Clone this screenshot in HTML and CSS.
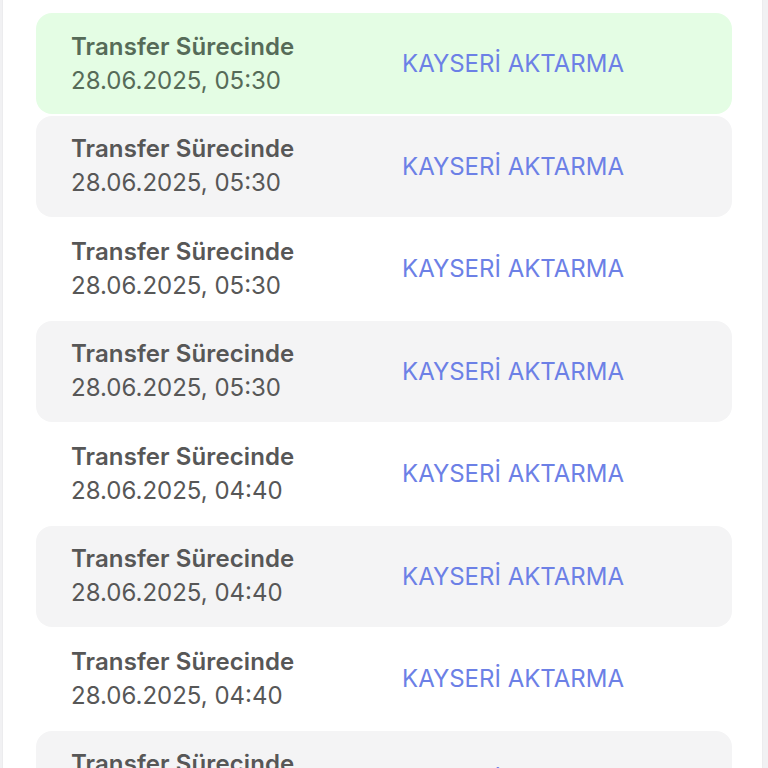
FILE: index.html
```html
<!DOCTYPE html>
<html lang="tr">
<head>
  <meta charset="UTF-8">
  <meta name="viewport" content="width=device-width, initial-scale=1.0">
  <title>Transferler</title>
  <link rel="stylesheet" href="styles.css">
</head>
<body>
  <div class="panel">
    <div class="list">
      <div class="row active">
        <div class="info">
          <div class="status">Transfer Sürecinde</div>
          <div class="date">28.06.2025, 05:30</div>
        </div>
        <div class="place">KAYSERİ AKTARMA</div>
      </div>
      <div class="row shaded">
        <div class="info">
          <div class="status">Transfer Sürecinde</div>
          <div class="date">28.06.2025, 05:30</div>
        </div>
        <div class="place">KAYSERİ AKTARMA</div>
      </div>
      <div class="row">
        <div class="info">
          <div class="status">Transfer Sürecinde</div>
          <div class="date">28.06.2025, 05:30</div>
        </div>
        <div class="place">KAYSERİ AKTARMA</div>
      </div>
      <div class="row shaded">
        <div class="info">
          <div class="status">Transfer Sürecinde</div>
          <div class="date">28.06.2025, 05:30</div>
        </div>
        <div class="place">KAYSERİ AKTARMA</div>
      </div>
      <div class="row">
        <div class="info">
          <div class="status">Transfer Sürecinde</div>
          <div class="date">28.06.2025, 04:40</div>
        </div>
        <div class="place">KAYSERİ AKTARMA</div>
      </div>
      <div class="row shaded">
        <div class="info">
          <div class="status">Transfer Sürecinde</div>
          <div class="date">28.06.2025, 04:40</div>
        </div>
        <div class="place">KAYSERİ AKTARMA</div>
      </div>
      <div class="row">
        <div class="info">
          <div class="status">Transfer Sürecinde</div>
          <div class="date">28.06.2025, 04:40</div>
        </div>
        <div class="place">KAYSERİ AKTARMA</div>
      </div>
      <div class="row shaded">
        <div class="info">
          <div class="status">Transfer Sürecinde</div>
          <div class="date">28.06.2025, 04:40</div>
        </div>
        <div class="place">KAYSERİ AKTARMA</div>
      </div>
    </div>
  </div>
</body>
</html>
```

FILE: styles.css
```css
html, body {
  margin: 0;
  height: 100%;
  overflow: hidden;
}
body {
  font-family: Inter, "Noto Sans", sans-serif;
  background-color: #f1f1f3;
  padding: 0 5px 0 2px;
}
.panel {
  background-color: #fff;
  min-height: 100%;
  border-left: 1px solid #ececee;
  border-right: 1px solid #ececee;
  padding: 13px 30px 0 33px;
}
.list {
  display: flex;
  flex-direction: column;
  gap: 1.5px;
}
.row {
  display: flex;
  align-items: center;
  height: 101px;
  padding: 0 35px;
  border-radius: 16px;
  color: #575757;
}
.row.shaded {
  background-color: #f4f4f5;
}
.row.active {
  background-color: #e4fde4;
  color: #566b58;
}
.info {
  width: 331px;
  flex-shrink: 0;
}
.status {
  font-size: 24px;
  font-weight: 600;
  line-height: 34px;
  letter-spacing: 0.1px;
}
.date {
  font-size: 24px;
  font-weight: 400;
  line-height: 34px;
}
.place {
  font-size: 24px;
  color: #6c80e6;
}
```
